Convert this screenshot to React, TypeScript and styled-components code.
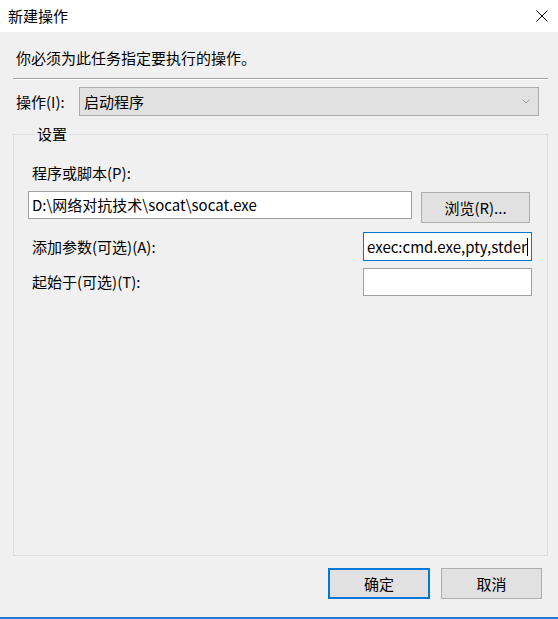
import styled, { createGlobalStyle } from 'styled-components';

const Global = createGlobalStyle`
  html, body { margin: 0; padding: 0; background: #f0f0f0; }
  body {
    font-family: "Noto Sans CJK SC", "Noto Sans", sans-serif;
    font-size: 15px;
    color: #000;
  }
  * { box-sizing: border-box; }
`;

const Window = styled.div`
  width: 558px;
  height: 619px;
  display: flex;
  flex-direction: column;
  background: #f0f0f0;
  overflow: hidden;
`;

const TitleBar = styled.div`
  flex: none;
  height: 32px;
  background: #fff;
  display: flex;
  align-items: center;
  justify-content: space-between;
  padding: 0 10px 0 8px;
  line-height: 20px;
`;

const Body = styled.div`
  flex: 1;
  display: flex;
  flex-direction: column;
  padding: 0 10px 0 13px;
`;

const Instruction = styled.div`
  margin-top: 16px;
  padding-left: 3px;
  line-height: 20px;
`;

const Separator = styled.div`
  margin-top: 10px;
  border-top: 1px solid #a0a0a0;
  border-bottom: 1px solid #fff;
`;

const ActionRow = styled.div`
  margin-top: 7px;
  display: flex;
  align-items: center;
  height: 29px;
`;

const ActionLabel = styled.label`
  width: 66px;
  padding-left: 3px;
  line-height: 20px;
`;

const Select = styled.div`
  width: 460px;
  height: 29px;
  background: #e1e1e1;
  border: 1px solid #adadad;
  display: flex;
  align-items: center;
  justify-content: space-between;
  padding: 0 8px 0 4px;
  line-height: 20px;
`;

const GroupBox = styled.fieldset`
  margin: 8px 0 0 0;
  padding: 0 15px 0 14px;
  height: 432px;
  width: 535px;
  border: 1px solid #dcdcdc;
  display: flex;
  flex-direction: column;
  min-width: 0;
`;

const Legend = styled.legend`
  margin-left: 7px;
  padding: 0 2px;
  line-height: 20px;
`;

const FieldLabel = styled.label`
  padding-left: 4px;
  line-height: 20px;
`;

const PathLabel = styled(FieldLabel)`
  margin-top: 19px;
`;

const PathRow = styled.div`
  margin-top: 8px;
  display: flex;
  align-items: flex-start;
`;

const OptionRow = styled.div<{ $top: number }>`
  margin-top: ${p => p.$top}px;
  display: flex;
  align-items: center;
  justify-content: space-between;
`;

const TextBox = styled.div<{ $width: number; $focused?: boolean }>`
  width: ${p => p.$width}px;
  height: ${p => (p.$focused ? 29 : 28)}px;
  background: #fff;
  border: 1px solid ${p => (p.$focused ? '#0078d7' : '#a0a0a0')};
  display: flex;
  align-items: center;
  padding: 0 2px 0 3px;
  line-height: 20px;
  white-space: nowrap;
  overflow: hidden;
`;

const TextClip = styled.span`
  flex: 1;
  overflow: hidden;
  white-space: nowrap;
`;

const Caret = styled.span`
  flex: none;
  width: 1px;
  height: 18px;
  background: #000;
  margin-right: 1px;
`;

const Button = styled.button<{ $default?: boolean; $width: number }>`
  width: ${p => p.$width}px;
  height: 31px;
  background: #e1e1e1;
  border: ${p => (p.$default ? '2px solid #0078d7' : '1px solid #adadad')};
  font: inherit;
  font-size: 15px;
  line-height: 20px;
  color: #000;
  padding: 0;
`;

const BrowseButton = styled(Button)`
  margin: 1px 0 0 9px;
`;

const Footer = styled.div`
  margin-top: 12px;
  padding-right: 6px;
  display: flex;
  justify-content: flex-end;
  gap: 11px;
`;

const TaskStrip = styled.div`
  flex: none;
  height: 2px;
  background: #2b7bd0;
`;

const CloseIcon = () => (
  <svg width="12" height="12" viewBox="0 0 12 12">
    <path d="M0.5 0.5 L11.5 11.5 M11.5 0.5 L0.5 11.5" stroke="#000" strokeWidth="1" />
  </svg>
);

const Chevron = () => (
  <svg width="8" height="5" viewBox="0 0 8 5">
    <path d="M0.5 0.5 L4 4 L7.5 0.5" stroke="#9a9a9a" strokeWidth="1" fill="none" />
  </svg>
);

export default function App() {
  return (
    <Window>
      <Global />
      <TitleBar>
        <span>新建操作</span>
        <CloseIcon />
      </TitleBar>
      <Body>
        <Instruction>你必须为此任务指定要执行的操作。</Instruction>
        <Separator />
        <ActionRow>
          <ActionLabel>操作(I):</ActionLabel>
          <Select>
            <span>启动程序</span>
            <Chevron />
          </Select>
        </ActionRow>
        <GroupBox>
          <Legend>设置</Legend>
          <PathLabel>程序或脚本(P):</PathLabel>
          <PathRow>
            <TextBox $width={384}>D:\网络对抗技术\socat\socat.exe</TextBox>
            <BrowseButton $width={109}>浏览(R)...</BrowseButton>
          </PathRow>
          <OptionRow $top={9}>
            <FieldLabel>添加参数(可选)(A):</FieldLabel>
            <TextBox $width={169} $focused>
              <TextClip>exec:cmd.exe,pty,stderr</TextClip>
              <Caret />
            </TextBox>
          </OptionRow>
          <OptionRow $top={7}>
            <FieldLabel>起始于(可选)(T):</FieldLabel>
            <TextBox $width={169} />
          </OptionRow>
        </GroupBox>
        <Footer>
          <Button $default $width={102}>确定</Button>
          <Button $width={101}>取消</Button>
        </Footer>
      </Body>
      <TaskStrip />
    </Window>
  );
}
